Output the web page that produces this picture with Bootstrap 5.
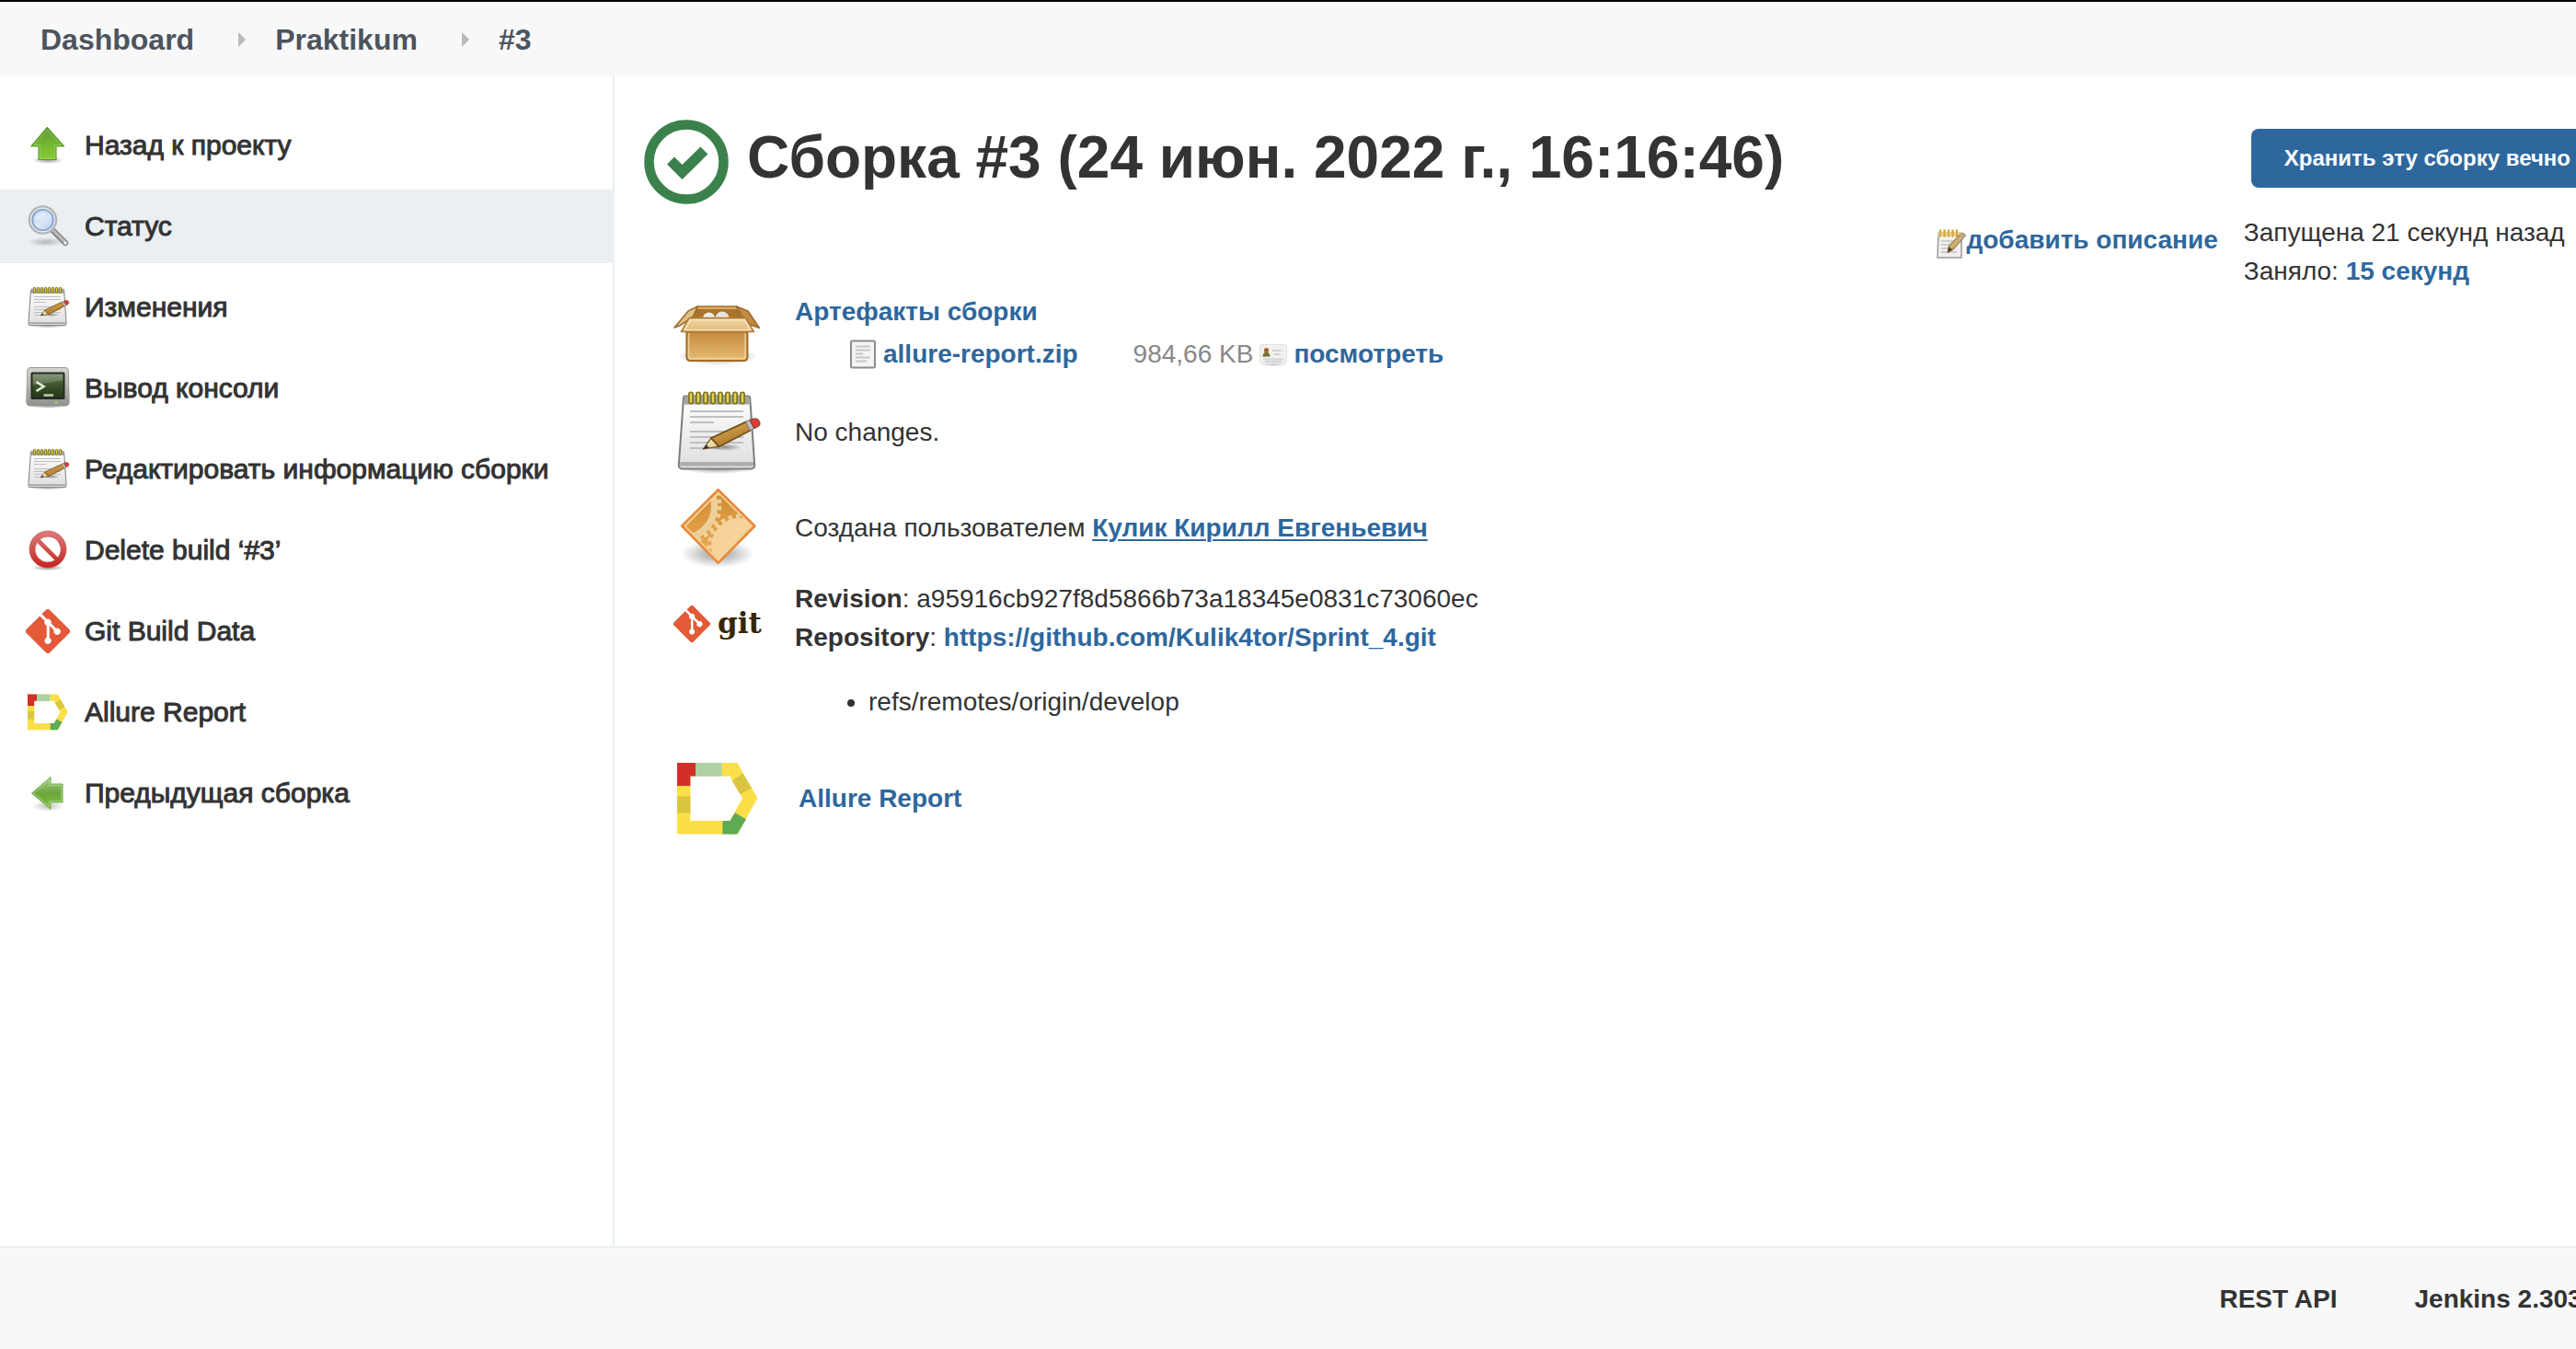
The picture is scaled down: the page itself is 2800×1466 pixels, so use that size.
<!DOCTYPE html>
<html lang="ru">
<head>
<meta charset="utf-8">
<meta name="viewport" content="width=device-width, initial-scale=1">
<title>Praktikum #3 [Jenkins]</title>
<link href="https://cdn.jsdelivr.net/npm/bootstrap@5.3.0/dist/css/bootstrap.min.css" rel="stylesheet">
<style>
  :root { --ink: #333; --link: #2e679d; --line: #eaeff2; --bar: #f8f8f8; }
  body { font-family: "Liberation Sans", Arial, sans-serif; font-size: 28px; line-height: 42px; color: var(--ink); overflow-x: hidden; }
  a { color: var(--link); font-weight: 700; text-decoration: none; }
  a:hover { text-decoration: underline; }
  svg { flex: none; display: block; }
  .page { margin-right: -30px; }
  .crumbs { background: var(--bar); border-top: 2px solid #000; height: 82px; padding: 2px 44px 0; font-size: 32px; }
  .crumbs a { color: #4d545d; }
  .crumb-sep { width: 8px; height: 16px; margin: 0 32px 0 48px; }
  .side { width: 668px; border-right: 2px solid var(--line); padding-top: 36px; }
  .task { height: 80px; margin-bottom: 8px; padding: 0 28px; gap: 16px; color: var(--ink); font-size: 30px; font-weight: 400; -webkit-text-stroke: 1px var(--ink); }
  .task.active { background: var(--line); }
  .i48 { width: 48px; height: 48px; }
  .i96 { width: 96px; height: 96px; }
  .i32 { width: 32px; height: 32px; }
  .content { padding: 46px 0 0 30px; }
  .title-row { gap: 18px; }
  .build-title { font-size: 64px; line-height: 86px; font-weight: 700; margin: 0; }
  .keep { background: var(--link); color: #fff; font-size: 24px; font-weight: 700; line-height: 32px; padding: 16px 36px; border: 0; border-radius: 8px; margin: 12px 0 28px 8px; }
  .describe { padding-top: 112px; }
  .facts { padding: 0 0 0 34px; margin-top: 90px; }
  .fact { min-height: 104px; gap: 36px; }
  .file-row { padding-left: 58px; margin-top: 4px; gap: 6px; }
  .size { color: #888; margin-left: 54px; }
  .user { text-decoration: underline; text-decoration-thickness: 2px; text-underline-offset: 3px; }
  .refs { padding-left: 80px; margin: 28px 0 32px; }
  .foot { background: var(--bar); border-top: 2px solid var(--line); height: 112px; gap: 84px; padding-top: 2px; }
  .foot a { color: var(--ink); }
</style>
</head>
<body>
<svg width="0" height="0" class="position-absolute" aria-hidden="true">
  <defs>
    <linearGradient id="gUp" x1="0" y1="0" x2="0" y2="1"><stop offset="0" stop-color="#5f9a32"/><stop offset="1" stop-color="#84cf33"/></linearGradient>
    <linearGradient id="gLeft" x1="0" y1="0" x2="0" y2="1"><stop offset="0" stop-color="#a9d08a"/><stop offset=".5" stop-color="#6ca53f"/><stop offset="1" stop-color="#7cc63c"/></linearGradient>
    <linearGradient id="gLens" x1="0" y1="0" x2="1" y2="1"><stop offset="0" stop-color="#a9c6ea"/><stop offset=".5" stop-color="#dbe7f6"/><stop offset="1" stop-color="#b4cdf0"/></linearGradient>
    <linearGradient id="gPaper" x1="0" y1="0" x2="0" y2="1"><stop offset="0" stop-color="#fff"/><stop offset="1" stop-color="#dedede"/></linearGradient>
    <linearGradient id="gPencil" x1="0" y1="0" x2=".5" y2="1"><stop offset="0" stop-color="#e3b557"/><stop offset="1" stop-color="#a8722a"/></linearGradient>
    <linearGradient id="gBezel" x1="0" y1="0" x2="0" y2="1"><stop offset="0" stop-color="#d3d6d0"/><stop offset="1" stop-color="#8f918c"/></linearGradient>
    <linearGradient id="gScreen" x1="0" y1="0" x2="0" y2="1"><stop offset="0" stop-color="#6f8360"/><stop offset=".5" stop-color="#3c5228"/><stop offset="1" stop-color="#24361a"/></linearGradient>
    <linearGradient id="gStop" x1="0" y1="0" x2="0" y2="1"><stop offset="0" stop-color="#de7d7a"/><stop offset="1" stop-color="#c2231f"/></linearGradient>
    <linearGradient id="gBox" x1="0" y1="0" x2="0" y2="1"><stop offset="0" stop-color="#c58b3c"/><stop offset="1" stop-color="#e6bd76"/></linearGradient>
    <linearGradient id="gFlap" x1="0" y1="0" x2="0" y2="1"><stop offset="0" stop-color="#f0d5a4"/><stop offset="1" stop-color="#e2bb78"/></linearGradient>
    <radialGradient id="gShade"><stop offset="0" stop-color="#000" stop-opacity=".4"/><stop offset="1" stop-color="#000" stop-opacity="0"/></radialGradient>
    <linearGradient id="gTile" x1="0" y1="0" x2="0" y2="1"><stop offset="0" stop-color="#cd8a31"/><stop offset="1" stop-color="#efb05a"/></linearGradient>
    <clipPath id="tileClip"><path d="M24.300 5 42.300 22.800 24.300 41 6.500 22.800z"/></clipPath>
  </defs>
  <symbol id="up" viewBox="0 0 48 48">
    <ellipse cx="24" cy="40" rx="17" ry="4" fill="url(#gShade)"/>
    <path d="M23.300 4.500 41.500 25H33v14.500H14V25H6z" fill="url(#gUp)" stroke="#5b9a2c" stroke-width="1.200" stroke-linejoin="round"/>
    <path d="M23.300 7 38.500 23.700H31.700v14.500H15.300V23.700H8.800z" fill="none" stroke="#b6e07f" stroke-opacity=".5"/>
  </symbol>
  <symbol id="left" viewBox="0 0 48 48">
    <ellipse cx="24" cy="38" rx="18" ry="6" fill="url(#gShade)" opacity=".6"/>
    <path d="M6.500 24 27 6.500V14h13v20H27v7.500z" fill="url(#gLeft)" stroke="#76ab53" stroke-linejoin="round"/>
    <path d="M8.500 24 25.800 9.300v6H38.700v17.500H25.800v6z" fill="none" stroke="#c5e6a6" stroke-opacity=".6"/>
  </symbol>
  <symbol id="find" viewBox="0 0 48 48">
    <ellipse cx="22" cy="41" rx="20" ry="5" fill="url(#gShade)" opacity=".6"/>
    <path d="M29 28 43 42" stroke="#8a8b88" stroke-width="6.500" stroke-linecap="round"/>
    <path d="M29 27.500 42.500 41" stroke="#bcbdba" stroke-width="3" stroke-linecap="round"/>
    <circle cx="43" cy="42" r="1.800" fill="#ececec"/>
    <circle cx="18.500" cy="17" r="14.500" fill="url(#gLens)" stroke="#b4b6b3" stroke-width="2.500"/>
    <circle cx="18.500" cy="17" r="12.700" fill="none" stroke="#e9eae8" stroke-width="1.500"/>
    <circle cx="18.500" cy="17" r="11.300" fill="none" stroke="#7f9fcf" stroke-width="1.600"/>
    <path d="M10 17c0-6 5-9 11-8-1 6-5 8-11 8z" fill="#fff" opacity=".4"/>
  </symbol>
  <symbol id="pad" viewBox="0 0 48 48">
    <ellipse cx="24" cy="43.500" rx="20" ry="3" fill="url(#gShade)"/>
    <path d="M6.500 4.200h34q1 0 1.100 1l2.500 36.500q.1 2-1.900 2H4.800q-2 0-1.900-2L5.500 5.200q.1-1 1-1z" fill="url(#gPaper)" stroke="#7e7f7c" stroke-width="1"/>
    <path d="M6 4.700h35l.4 4H5.800z" fill="#a3a49c"/>
    <path d="M3.600 40h39.900v2.200H3.500z" fill="#adadad"/>
    <path d="M9 12.500h29M9 15.500h29M9 18.500h13M9 23.500h29M9 26.500h29M9 29.500h29M9 32.500h16" stroke="#bfbfbf" stroke-width="1"/>
    <path d="M9.500 3.200v4M13.500 3.200v4M17.500 3.200v4M21.500 3.200v4M25.500 3.200v4M29.500 3.200v4M33.500 3.200v4M37.500 3.200v4" stroke="#7d7420" stroke-width="3" stroke-linecap="round"/>
    <path d="M9.500 3.200v4M13.500 3.200v4M17.500 3.200v4M21.500 3.200v4M25.500 3.200v4M29.500 3.200v4M33.500 3.200v4M37.500 3.200v4" stroke="#e2cf52" stroke-width="1.300" stroke-linecap="round"/>
    <ellipse cx="28" cy="32" rx="9" ry="2" fill="url(#gShade)"/>
    <path d="M16.200 33 20.500 27 24.500 31.500z" fill="#ecd9a0" stroke="#6b4a17" stroke-width=".6"/>
    <path d="M16.200 33 17.800 30.600 19.500 32.300z" fill="#333"/>
    <path d="M20.500 27 39.500 18.200l2.400 4.600L24.800 31.700z" fill="url(#gPencil)" stroke="#6e4b18" stroke-width=".8"/>
    <path d="M39.200 18.300 41.500 17.200l2.400 4.500-2.300 1.200z" fill="#bdbdc2" stroke="#7a7468" stroke-width=".5"/>
    <path d="M41.500 17.200q3.600-1.600 4.900.3t-.3 3.100l-2.200 1.100z" fill="#e03a34" stroke="#7e4a30" stroke-width=".6"/>
  </symbol>
  <symbol id="term" viewBox="0 0 48 48">
    <ellipse cx="24" cy="43" rx="20" ry="3" fill="url(#gShade)"/>
    <path d="M5 1.500h38q3 0 3.300 3l.9 34q0 4.500-4 4.500H4.800q-4 0-4-4.500l.9-34q.3-3 3.300-3z" fill="url(#gBezel)" stroke="#999b96"/>
    <rect x="5.500" y="6.500" width="37" height="29.500" rx="1.500" fill="#262b22"/>
    <rect x="7.500" y="8.500" width="33" height="25.500" fill="url(#gScreen)"/>
    <path d="M7.500 8.500h33v7C29 16 20 20 7.500 20z" fill="#fff" opacity=".16"/>
    <path d="m11.500 17 8 5-8 5" fill="none" stroke="#e3efdb" stroke-width="2.600"/>
    <path d="M19.500 31.500h10.500" stroke="#b9cbae" stroke-width="2.600"/>
    <circle cx="33" cy="39.500" r="1.300" fill="#9cdf55"/>
  </symbol>
  <symbol id="stop" viewBox="0 0 48 48">
    <ellipse cx="24" cy="43" rx="18" ry="3.500" fill="url(#gShade)"/>
    <circle cx="24" cy="23" r="17" fill="#fff" fill-opacity=".8"/>
    <path d="M24 3a20 20 0 1 0 0 40 20 20 0 0 0 0-40zm0 6a14 14 0 0 1 10.800 22.900L15.100 12.200A14 14 0 0 1 24 9zM12.300 15.300l19.400 19.400A14 14 0 0 1 12.300 15.300z" fill="url(#gStop)" stroke="#cf5552" stroke-width=".8"/>
  </symbol>
  <symbol id="gitmark" viewBox="0 0 16 16">
    <path fill="#e25a38" d="M15.698 7.287 8.712.302a1.030 1.030 0 0 0-1.457 0l-1.450 1.450 1.840 1.840a1.223 1.223 0 0 1 1.550 1.560l1.773 1.774a1.224 1.224 0 0 1 1.267 2.025 1.226 1.226 0 0 1-2.002-1.334L8.580 5.963v4.353a1.226 1.226 0 1 1-1.008-.036V5.887a1.226 1.226 0 0 1-.666-1.608L5.093 2.465l-4.790 4.790a1.030 1.030 0 0 0 0 1.457l6.986 6.986a1.030 1.030 0 0 0 1.457 0l6.953-6.953a1.030 1.030 0 0 0 0-1.457"/>
  </symbol>
  <symbol id="allure" viewBox="0 0 48 48">
    <path fill="#fadf49" fill-rule="evenodd" d="M2 4.500H34.700L45.700 23.800 34.700 43.300H2zM9.200 11.800V36H30.700L37.500 23.800 30.700 11.800z"/>
    <path fill="#d22f28" d="M2 4.500h10v7.300H9.200V17H2z"/>
    <path fill="#aed1a6" d="M12 4.500h14.200v7.300H12z"/>
    <path fill="#dac542" d="M2 22.800h7.200v8.900H2zM31.800 14.200 37.700 10.300 42.500 18.300 36.300 21.600z"/>
    <path fill="#5fab53" d="M26.700 36h4l2.800-4.400 6 3.500-4.800 8.200h-8z"/>
  </symbol>
  <symbol id="pkg" viewBox="0 0 48 48">
    <ellipse cx="24" cy="36.500" rx="22" ry="5" fill="url(#gShade)"/>
    <path d="M13.200 9.500h21l6 7H8z" fill="#d9ac64" stroke="#a7712c" stroke-width=".8"/>
    <path d="M12.500 11h22l3 5H10.500z" fill="#a8742c"/>
    <circle cx="19.300" cy="16" r="3.300" fill="#ececea"/><circle cx="26.500" cy="16" r="3.800" fill="#e4e4e2"/>
    <path d="M13.200 9.500 8.300 11.800.5 21l3.300-1.200 7-5z" fill="#e3bf85" stroke="#9c6b2a" stroke-width=".8" stroke-linejoin="round"/>
    <path d="M34.200 9.500 40.500 12 46.700 21.200 42 19.500 37 14.500z" fill="#c28c42" stroke="#9c6b2a" stroke-width=".8" stroke-linejoin="round"/>
    <path d="M7.200 23.200h33V37q0 2-2 2h-29q-2 0-2-2z" fill="url(#gBox)" stroke="#a06c26" stroke-width="1"/>
    <path d="M8.300 24v12.600q0 1.300 1.300 1.300h28.200q1.300 0 1.300-1.300V24" fill="none" stroke="#f3d9a4" stroke-width=".8" opacity=".8"/>
    <path d="M8.500 15.800h30.700l4.500 7.400H4.200z" fill="url(#gFlap)" stroke="#b27e37" stroke-width=".8" stroke-linejoin="round"/>
    <path d="M9.200 16.800h29.500l3 5.500H6.200z" fill="none" stroke="#fae8c6" stroke-width=".6"/>
  </symbol>
  <symbol id="tile" viewBox="0 0 48 48">
    <ellipse cx="24" cy="38" rx="20" ry="7.500" fill="url(#gShade)"/>
    <path d="M24.300 3 44.300 22.800 24.300 43 4.500 22.800z" fill="url(#gTile)"/>
    <g clip-path="url(#tileClip)">
      <circle cx="5" cy="12" r="17.300" fill="none" stroke="#efcf98" stroke-width="3.600"/>
      <circle cx="5" cy="12" r="20" fill="none" stroke="#efcf98" stroke-width="2.400" stroke-dasharray="2.200 2"/>
      <circle cx="36" cy="34" r="15.500" fill="#f5d39a"/>
      <circle cx="36" cy="34" r="16.500" fill="none" stroke="#f2cf95" stroke-width="2.400" stroke-dasharray="2.200 2"/>
    </g>
    <path d="M24.300 3 44.300 22.800 24.300 43 4.500 22.800z" fill="none" stroke="#e98a3c" stroke-width="1.200" stroke-linejoin="round"/>
    <path d="M24.300 4.700 42.600 22.800 24.300 41.300 6.200 22.800z" fill="none" stroke="#f7d29c" stroke-width=".8"/>
  </symbol>
  <symbol id="doc" viewBox="0 0 32 32">
    <rect x="3" y="1.500" width="26" height="29" rx="1.500" fill="#f4f4f3" stroke="#8c8d8a" stroke-width="2"/>
    <path d="M8 7.500h16M8 11.500h16M8 15.500h8M8 19.500h16M8 23.500h12" stroke="#c6c6c6" stroke-width="1.800"/>
  </symbol>
  <symbol id="idcard" viewBox="0 0 32 32">
    <ellipse cx="16" cy="27" rx="15" ry="2.500" fill="url(#gShade)" opacity=".6"/>
    <rect x="1.500" y="5.500" width="29" height="20.500" rx="2" fill="#f1f1f0" stroke="#e2e2e0"/>
    <path d="M4.500 18.500c0-3 1.500-5 4-5s4 2 4 5z" fill="#73712f"/>
    <circle cx="8.500" cy="11.500" r="2.600" fill="#9c6432"/>
    <path d="M15 12h10M16 16h7M5 21.500h22M7 24h18" stroke="#d4d4d2" stroke-width="1.800"/>
  </symbol>
  <symbol id="note" viewBox="0 0 32 32">
    <path d="M2 4h25v27H1z" fill="#efefed" stroke="#9b9c99" stroke-width="1.500"/>
    <path d="M5 13h16M5 17h12M5 21h15M5 25h17" stroke="#c4c4c2" stroke-width="1.300"/>
    <path d="M1.500 3h26v5h-26z" fill="#ead79a"/>
    <path d="M4 1.500v6M8.500 1.500v6M13 1.500v6M17.500 1.500v6M22 1.500v6" stroke="#d0ab45" stroke-width="2.400" stroke-linecap="round"/>
    <path d="M12 25.500 13.500 18 27 4.500q3-1 4.500 2.500L18 22z" fill="#d1ad6e" stroke="#7d6237" stroke-width="1"/>
    <path d="M12 25.500l1.300-6.500 4.200 3.500z" fill="#55401f"/>
    <path d="M24.500 7 29 10l2.500-3q-1.500-3.500-4.500-2.500z" fill="#b9a892"/>
  </symbol>
</svg>

<div class="page d-flex flex-column min-vh-100">
  <nav class="crumbs d-flex align-items-center" aria-label="breadcrumb">
    <a href="#">Dashboard</a>
    <svg class="crumb-sep" viewBox="0 0 8 16" aria-hidden="true"><path d="M0 0 8 8 0 16z" fill="#bababa"/></svg>
    <a href="#">Praktikum</a>
    <svg class="crumb-sep" viewBox="0 0 8 16" aria-hidden="true"><path d="M0 0 8 8 0 16z" fill="#bababa"/></svg>
    <a href="#" aria-current="page">#3</a>
  </nav>

  <div class="d-flex flex-grow-1">
    <nav class="side flex-shrink-0" aria-label="Задачи">
      <a class="task d-flex align-items-center" href="#"><svg class="i48"><use href="#up"/></svg>Назад к проекту</a>
      <a class="task active d-flex align-items-center" href="#"><svg class="i48"><use href="#find"/></svg>Статус</a>
      <a class="task d-flex align-items-center" href="#"><svg class="i48"><use href="#pad"/></svg>Изменения</a>
      <a class="task d-flex align-items-center" href="#"><svg class="i48"><use href="#term"/></svg>Вывод консоли</a>
      <a class="task d-flex align-items-center" href="#"><svg class="i48"><use href="#pad"/></svg>Редактировать информацию сборки</a>
      <a class="task d-flex align-items-center" href="#"><svg class="i48"><use href="#stop"/></svg>Delete build ‘#3’</a>
      <a class="task d-flex align-items-center" href="#"><svg class="i48"><use href="#gitmark"/></svg>Git Build Data</a>
      <a class="task d-flex align-items-center" href="#"><svg class="i48"><use href="#allure"/></svg>Allure Report</a>
      <a class="task d-flex align-items-center" href="#"><svg class="i48"><use href="#left"/></svg>Предыдущая сборка</a>
    </nav>

    <main class="content d-flex flex-grow-1 align-items-start justify-content-between">
      <div>
        <div class="title-row d-flex align-items-start">
          <svg class="i96" viewBox="0 0 96 96" role="img" aria-label="Успешно"><circle cx="48" cy="48" r="40.500" fill="none" stroke="#3b814c" stroke-width="10.500"/><path d="m27 50.500 8-8 8.500 8.500 20-19.500 8 8L43.500 67z" fill="#3b814c"/></svg>
          <h1 class="build-title">Сборка #3 (24 июн. 2022 г., 16:16:46)</h1>
        </div>

        <div class="facts">
          <div class="fact d-flex align-items-start">
            <svg class="i96"><use href="#pkg"/></svg>
            <div class="pt-1">
              <a href="#">Артефакты сборки</a>
              <div class="file-row d-flex align-items-center">
                <svg class="i32"><use href="#doc"/></svg><a href="#">allure-report.zip</a>
                <span class="size">984,66 KB</span>
                <svg class="i32"><use href="#idcard"/></svg><a href="#">посмотреть</a>
              </div>
            </div>
          </div>
          <div class="fact d-flex align-items-center"><svg class="i96"><use href="#pad"/></svg><div>No changes.</div></div>
          <div class="fact d-flex align-items-center"><svg class="i96"><use href="#tile"/></svg><div>Создана пользователем <a class="user" href="#">Кулик Кирилл Евгеньевич</a></div></div>
          <div class="fact d-flex align-items-start">
            <svg class="i96" viewBox="0 0 96 96" role="img" aria-label="git"><use href="#gitmark" x="0" y="32" width="40" height="40"/><text x="48" y="62" font-family="DejaVu Serif, serif" font-weight="700" font-size="31" fill="#362701">git</text></svg>
            <div class="pt-1">
              <b>Revision</b>: a95916cb927f8d5866b73a18345e0831c73060ec<br>
              <b>Repository</b>: <a href="#">https://github.com/Kulik4tor/Sprint_4.git</a>
              <ul class="refs"><li>refs/remotes/origin/develop</li></ul>
            </div>
          </div>
          <div class="fact d-flex align-items-center"><svg class="i96"><use href="#allure"/></svg><a class="ps-1" href="#">Allure Report</a></div>
        </div>
      </div>

      <div class="d-flex align-items-start text-nowrap">
        <div class="describe d-flex align-items-center"><svg class="i32 mt-2"><use href="#note"/></svg><a href="#">добавить описание</a></div>
        <div class="ms-4 ps-1">
          <button type="button" class="keep d-block">Хранить эту сборку вечно</button>
          <div>Запущена 21 секунд назад</div>
          <div>Заняло: <a href="#">15 секунд</a></div>
        </div>
      </div>
    </main>
  </div>

  <footer class="foot d-flex align-items-center justify-content-end">
    <a href="#">REST API</a>
    <a href="#">Jenkins 2.303.1</a>
  </footer>
</div>
<script src="https://cdn.jsdelivr.net/npm/bootstrap@5.3.0/dist/js/bootstrap.bundle.min.js"></script>
</body>
</html>
